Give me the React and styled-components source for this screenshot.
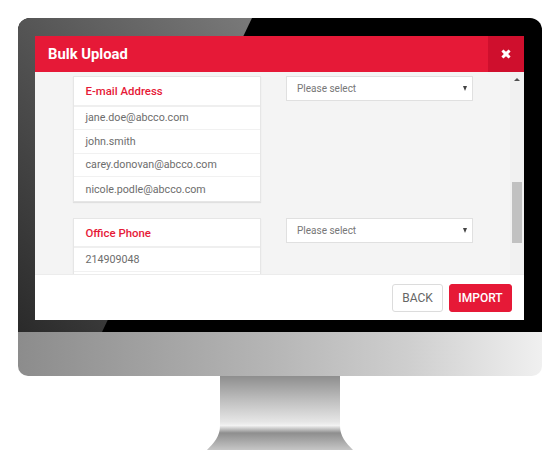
import styled, { createGlobalStyle } from "styled-components";

const GlobalStyle = createGlobalStyle`
  html, body {
    margin: 0;
    padding: 0;
    background: #fff;
    font-family: Roboto, "Liberation Sans", sans-serif;
  }
`;

const Page = styled.div`
  width: 554px;
  height: 450px;
  overflow: hidden;
  padding: 18px 12px 0 18px;
  box-sizing: border-box;
`;

const Monitor = styled.div`
  width: 524px;
  display: flex;
  flex-direction: column;
  align-items: center;
`;

const Bezel = styled.div`
  position: relative;
  width: 100%;
  height: 314px;
  box-sizing: border-box;
  padding: 18px 18px 12px 17px;
  background: #000;
  border-radius: 12px 12px 0 0;
  overflow: hidden;
`;

const Glare = styled.div`
  position: absolute;
  inset: 0;
  background: linear-gradient(49deg, #2a2a2a 0%, #7a7a7a 64%);
  clip-path: polygon(0 0, 234px 0, 84px 100%, 0 100%);
`;

const Chin = styled.div`
  width: 100%;
  height: 44px;
  background: linear-gradient(90deg, #8c8c8c 0%, #b7b7b7 50%, #cfcfcf 75%, #f0f0f0 100%);
  border-radius: 0 0 10px 10px;
`;

const Stand = styled.svg`
  display: block;
  width: 160px;
  height: 74px;
`;

const Screen = styled.div`
  position: relative;
  height: 284px;
  display: flex;
  flex-direction: column;
  background: #fff;
`;

const Header = styled.header`
  height: 36px;
  flex: none;
  display: flex;
  align-items: stretch;
  justify-content: space-between;
  background: #e61937;
`;

const Title = styled.h1`
  margin: 0;
  padding-left: 13px;
  align-self: center;
  font-size: 14.8px;
  font-weight: 700;
  color: #fff;
`;

const Close = styled.div`
  width: 36px;
  display: flex;
  align-items: center;
  justify-content: center;
  background: #cf0f2d;
  color: #fff;
`;

const Body = styled.div`
  flex: none;
  height: 202px;
  display: flex;
  background: #f4f4f4;
  border-bottom: 1px solid #ececec;
  box-sizing: content-box;
`;

const Content = styled.div`
  flex: 1;
  min-width: 0;
  height: 202px;
  overflow: hidden;
  padding: 4px 0 0 38px;
  box-sizing: border-box;
  display: flex;
  flex-direction: column;
  gap: 16px;
`;

const MapRow = styled.div`
  flex: none;
  display: flex;
  align-items: flex-start;
  gap: 25px;
`;

const Card = styled.div`
  flex: none;
  width: 187.5px;
  background: #fff;
  border: 1px solid #e6e6e6;
  box-sizing: border-box;
  box-shadow: 0 1px 1px rgba(0, 0, 0, 0.08);
`;

const CardTitle = styled.div`
  height: 29.5px;
  box-sizing: border-box;
  display: flex;
  align-items: center;
  padding-left: 11.5px;
  font-size: 11.4px;
  font-weight: 500;
  color: #e61937;
  border-bottom: 2px solid #efefef;
`;

const CardRow = styled.div`
  height: 23.6px;
  box-sizing: border-box;
  display: flex;
  align-items: center;
  padding-left: 11.5px;
  font-size: 10.7px;
  color: #6d6d6d;
  border-bottom: 1px solid #f1f1f1;

  &:last-child {
    border-bottom: 0;
  }
`;

const Select = styled.div`
  flex: none;
  width: 187.5px;
  height: 25px;
  display: flex;
  align-items: center;
  justify-content: space-between;
  padding: 0 5.5px 0 10.5px;
  box-sizing: border-box;
  background: #fff;
  border: 1px solid #e0e0e0;
  font-size: 10px;
  color: #777;
`;

const Caret = styled.span`
  width: 0;
  height: 0;
  border-left: 2.5px solid transparent;
  border-right: 2.5px solid transparent;
  border-top: 5px solid #444;
`;

const Scrollbar = styled.div`
  flex: none;
  width: 14px;
  display: flex;
  flex-direction: column;
  align-items: center;
  background: #f1f1f1;
`;

const ScrollUp = styled.span`
  margin-top: 6px;
  width: 0;
  height: 0;
  border-left: 3px solid transparent;
  border-right: 3px solid transparent;
  border-bottom: 3px solid #505050;
`;

const ScrollThumb = styled.div`
  width: 10px;
  height: 61px;
  margin-top: 101px;
  background: #c1c1c1;
`;

const Footer = styled.footer`
  flex: 1;
  display: flex;
  align-items: center;
  justify-content: flex-end;
  gap: 6px;
  padding: 0 12px 0 0;
  background: #fff;
`;

const Button = styled.button`
  height: 28px;
  width: ${(p) => (p.$primary ? "63px" : "51px")};
  padding: 0;
  border-radius: 3px;
  border: 1px solid ${(p) => (p.$primary ? "#e61937" : "#dcdcdc")};
  background: ${(p) => (p.$primary ? "#e61937" : "#fff")};
  color: ${(p) => (p.$primary ? "#fff" : "#666")};
  font-family: Roboto, sans-serif;
  font-size: 12px;
  font-weight: ${(p) => (p.$primary ? 500 : 400)};
`;

const fields = [
  {
    label: "E-mail Address",
    values: [
      "jane.doe@abcco.com",
      "john.smith",
      "carey.donovan@abcco.com",
      "nicole.podle@abcco.com",
    ],
  },
  { label: "Office Phone", values: ["214909048", ""] },
];

const App = () => {
  return (
    <Page>
      <GlobalStyle />
      <Monitor>
        <Bezel>
          <Glare />
          <Screen>
            <Header>
              <Title>Bulk Upload</Title>
              <Close>
                <svg width="10" height="10" viewBox="0 0 10 10">
                  <path
                    d="M2.4.4 5 2.8 7.6.4 9.6 2.4 7.2 5l2.4 2.6-2 2L5 7.2 2.4 9.6l-2-2L2.8 5 .4 2.4Z"
                    fill="#fff"
                  />
                </svg>
              </Close>
            </Header>
            <Body>
              <Content>
                {fields.map((field) => (
                  <MapRow key={field.label}>
                    <Card>
                      <CardTitle>{field.label}</CardTitle>
                      {field.values.map((value) => (
                        <CardRow key={value}>{value}</CardRow>
                      ))}
                    </Card>
                    <Select>
                      Please select
                      <Caret />
                    </Select>
                  </MapRow>
                ))}
              </Content>
              <Scrollbar>
                <ScrollUp />
                <ScrollThumb />
              </Scrollbar>
            </Body>
            <Footer>
              <Button>BACK</Button>
              <Button $primary>IMPORT</Button>
            </Footer>
          </Screen>
        </Bezel>
        <Chin />
        <Stand viewBox="0 0 160 74">
          <defs>
            <linearGradient id="neck" x1="0" y1="0" x2="0" y2="1">
              <stop offset="0" stopColor="#8e8e8e" />
              <stop offset="0.35" stopColor="#c2c2c2" />
              <stop offset="0.62" stopColor="#e6e6e6" />
              <stop offset="0.67" stopColor="#f2f2f2" />
              <stop offset="0.77" stopColor="#8e8e8e" />
              <stop offset="1" stopColor="#c6c6c6" />
            </linearGradient>
          </defs>
          <path
            d="M20 0H140V50C140 60 146 67 153 74H7C14 67 20 60 20 50Z"
            fill="url(#neck)"
          />
        </Stand>
      </Monitor>
    </Page>
  );
};

export default App;
